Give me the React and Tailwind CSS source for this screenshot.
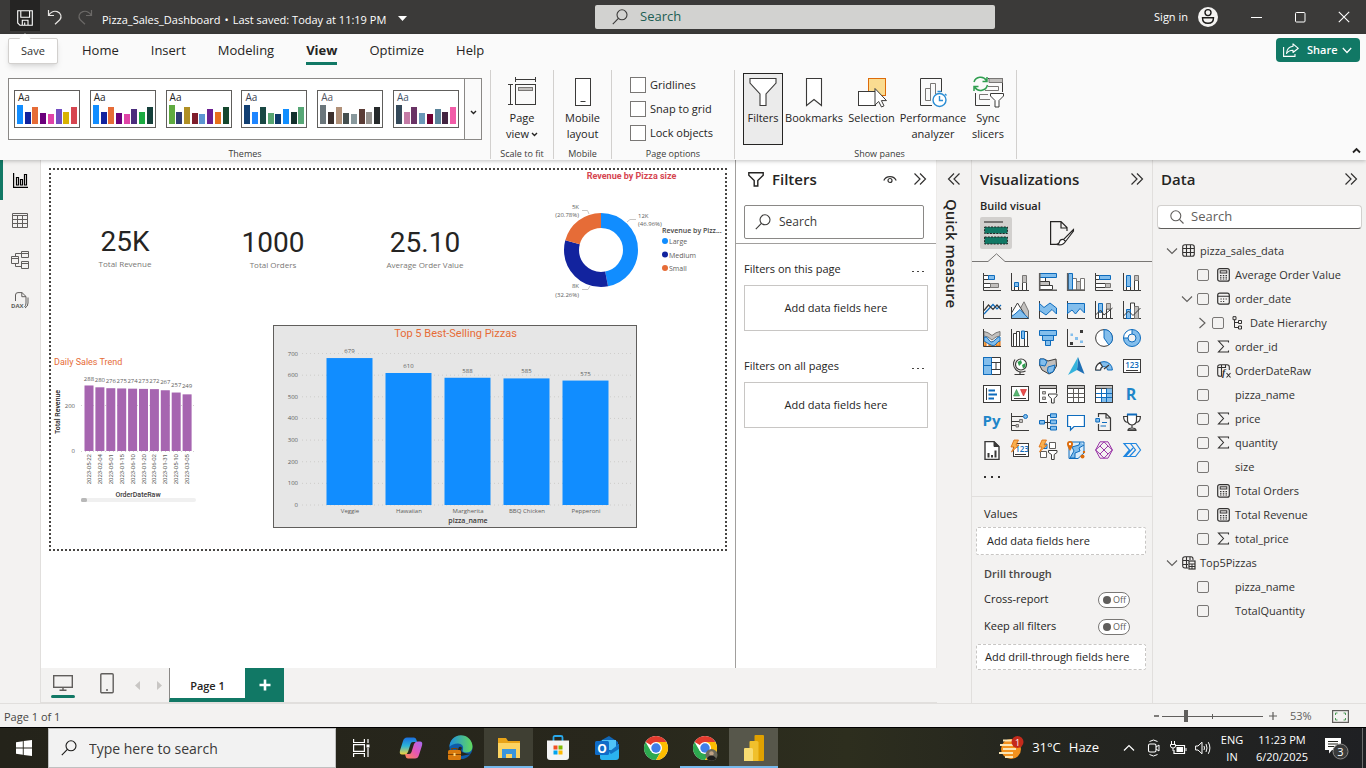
import React from "react";

const D = "#3b3a39";
const B = "#0f6cbd";
const LB = "#83beec";
const G = "#c2c0be";

/* ---------- shared icons ---------- */

function Svg({ w = 16, h, vb, children, className = "" }) {
  return (
    <svg width={w} height={h || w} viewBox={vb || `0 0 ${w} ${h || w}`} fill="none" className={`block shrink-0 ${className}`} aria-hidden="true">
      {children}
    </svg>
  );
}

const DoubleChevron = ({ flip }) => (
  <Svg w={14} h={14}>
    <path d={flip ? "M7 1.5L1.5 7L7 12.5M12.5 1.5L7 7L12.5 12.5" : "M1.5 1.5L7 7L1.5 12.5M7 1.5L12.5 7L7 12.5"} stroke="#323130" strokeWidth="1.2" />
  </Svg>
);

const Magnifier = ({ color = D, size = 16 }) => (
  <Svg w={size} vb="0 0 16 16">
    <circle cx="10" cy="5.8" r="5" stroke={color} strokeWidth="1.1" />
    <path d="M6.4 9.4L0.8 15.2" stroke={color} strokeWidth="1.1" />
  </Svg>
);

/* ---------- title bar ---------- */

function TitleBar() {
  return (
    <header className="flex h-[34px] shrink-0 items-center bg-[#3b3a39] text-white">
      <div className="flex h-full min-w-0 flex-1 items-start pl-[10px]">
        <div className="relative">
          <button aria-label="Save" className="flex h-[31px] w-[30px] items-center justify-center bg-[#252423] pt-1">
            <Svg w={16}>
              <path d="M.7 .7H15.3V15.3H3L.7 13zM3.8 .7V7.3H12.6V.7M5.3 15V10.3H11V15M7.7 12.5V15" stroke="#fff" strokeWidth="1.1" />
            </Svg>
          </button>
          <div role="tooltip" className="absolute top-[38px] -left-0.5 z-20 flex h-[26px] w-[50px] items-center justify-center rounded-xs border border-[#d2d0ce] bg-white text-[11px] text-[#323130] shadow-md">
            <span className="absolute -top-1 left-3 size-2 rotate-45 bg-white" />
            Save
          </div>
        </div>
        <button aria-label="Undo" className="flex h-[34px] w-[30px] items-center justify-center">
          <Svg w={16}>
            <path d="M1.5 1V6.5H7M1.8 6.2C4 3 7 1.6 10.2 2.6C14 3.9 15.2 8 12.8 10.8L8 15.2" stroke="#e8e6e4" strokeWidth="1.2" />
          </Svg>
        </button>
        <button aria-label="Redo" className="flex h-[34px] w-[30px] items-center justify-center">
          <Svg w={16}>
            <path d="M14.5 1V6.5H9M14.2 6.2C12 3 9 1.6 5.8 2.6C2 3.9 .8 8 3.2 10.8L8 15.2" stroke="#6b6967" strokeWidth="1.2" />
          </Svg>
        </button>
        <button className="flex h-10 items-center gap-1 whitespace-nowrap pl-0.5 text-[11px]">
          <span>Pizza_Sales_Dashboard</span>
          <span>•</span>
          <span>Last saved: Today at 11:19 PM</span>
          <Svg w={9} h={5} className="mb-1 ml-2"><path d="M0 0H9L4.5 5z" fill="#fff" /></Svg>
        </button>
      </div>
      <label className="flex h-6 w-[400px] items-center gap-3 rounded-xs bg-[#d2d2d0] pl-[17px]">
        <Magnifier size={16} />
        <input aria-label="Search" placeholder="Search" className="w-full bg-transparent text-[13px] outline-none placeholder:text-[#205e53]" />
      </label>
      <div className="flex w-[371px] items-center justify-end">
        <button className="flex items-center gap-2.5 text-[11px]">
          Sign in
          <Svg w={20}>
            <circle cx="10" cy="10" r="10" fill="#f3f2f1" />
            <circle cx="10" cy="5.6" r="3" stroke="#1b1a19" strokeWidth="1.4" />
            <path d="M4.5 10.7H15.5C15.5 14.5 13.5 16.3 10 16.3S4.5 14.5 4.5 10.7z" stroke="#1b1a19" strokeWidth="1.4" />
          </Svg>
        </button>
        <div className="flex pl-4">
          <button aria-label="Minimize" className="flex h-8 w-11 items-center justify-center"><Svg w={11}><path d="M0 5.5H11" stroke="#fff" /></Svg></button>
          <button aria-label="Maximize" className="flex h-8 w-11 items-center justify-center"><Svg w={11}><rect x=".5" y=".5" width="9.5" height="9.5" rx="1" stroke="#fff" /></Svg></button>
          <button aria-label="Close" className="flex h-8 w-11 items-center justify-center"><Svg w={12}><path d="M.8 .8L11.2 11.2M11.2 .8L.8 11.2" stroke="#fff" strokeWidth="1.1" /></Svg></button>
        </div>
      </div>
    </header>
  );
}

/* ---------- ribbon ---------- */

const themes = [
  { t: "#252423", c: ["#118dff", "#12239e", "#e66c37", "#6b007b", "#e044a7", "#744ec2", "#d9b300", "#d64550"] },
  { t: "#252423", c: ["#118dff", "#12239e", "#e66c37", "#6b007b", "#e044a7", "#4b2e7d", "#1aab40", "#15403b"] },
  { t: "#252423", c: ["#5faa3f", "#2f3a75", "#b08f24", "#7f1d2c", "#5b95d2", "#6b1f91", "#e8701a", "#15472d"] },
  { t: "#3b3f52", c: ["#123f72", "#1f86ff", "#194843", "#58a571", "#0e3b6b", "#108eff", "#12302c", "#57a776"] },
  { t: "#55565f", c: ["#6b767b", "#3c302d", "#b09078", "#444f4f", "#88989c", "#5b3c35", "#94908c", "#262a2b"] },
  { t: "#44546a", c: ["#34495a", "#c47ba6", "#6a3365", "#6a99b8", "#6f0033", "#5a839a", "#432441", "#f25ca8"] },
];
const themeHeights = [19, 12, 17, 11, 10, 15, 12, 17];

function ThemeThumb({ theme, n }) {
  return (
    <button aria-label={`Theme ${n}`} className="flex h-[38px] w-[66px] flex-col border border-[#605e5c] bg-white pl-0.5">
      <span className="pl-px text-left text-[10px] leading-[13px]" style={{ color: theme.t }}>Aa</span>
      <span className="flex h-5 w-[60px] items-end justify-between">
        {theme.c.map((c, i) => (
          <span key={i} className="w-1.5" style={{ background: c, height: themeHeights[i] }} />
        ))}
      </span>
    </button>
  );
}

function Group({ label, className, children }) {
  return (
    <section className={`mt-1 mb-px flex shrink-0 flex-col border-r border-[#d2d0ce] ${className}`}>
      <div className="flex flex-1">{children}</div>
      <div className="text-center text-[9px] leading-[10px] text-[#3b3a39]">{label}</div>
    </section>
  );
}

function BigButton({ icon, lines, className, selected }) {
  return (
    <button className={`mt-[3px] flex h-[72px] flex-col items-center border pt-px text-[11px] leading-4 text-[#252423] ${selected ? "border-[#252423] bg-[#ebebeb]" : "border-transparent"} ${className}`}>
      <span className="mb-0.5 flex h-[33px] items-center">{icon}</span>
      {lines.map((l, i) => (
        <span key={i} className="flex items-center whitespace-nowrap">{l}</span>
      ))}
    </button>
  );
}

const PageViewIcon = () => (
  <Svg w={30} h={32}>
    <path d="M8.5 1V6M28.5 1V6M8.5 3.5H28.5M1 8.5H6M1 28.5H6M3.5 8.5V28.5" stroke={D} />
    <rect x="8.5" y="8.5" width="20" height="20" stroke={D} />
    <rect x="11.5" y="11.5" width="14" height="3" fill={G} stroke="#797775" />
  </Svg>
);
const MobileIcon = () => (
  <Svg w={18} h={32}><rect x="1.5" y="2.5" width="15" height="27" fill="#fff" stroke={D} /><path d="M6.5 25.5H11.5" stroke={D} /></Svg>
);
const FilterBig = () => (
  <Svg w={28} h={32}><path d="M1 2.5H27V7L17 18V29.5H11V18L1 7z" fill="#fff" stroke={D} strokeWidth="1.1" /></Svg>
);
const BookmarkBig = () => (
  <Svg w={18} h={32}><path d="M1.5 2.5H16.5V29.5L9 23.5L1.5 29.5z" fill="#fff" stroke={D} strokeWidth="1.1" /></Svg>
);
const SelectionBig = () => (
  <Svg w={30} h={32}>
    <rect x="11.5" y="2.5" width="17" height="17" fill="#fadc91" stroke="#dd6b0a" />
    <rect x="1.5" y="15.5" width="17" height="14" fill="#fff" stroke={D} />
    <path d="M18 12.5V29L21.7 25.5L24.5 31L27 29.8L24.4 24.6H29.5z" fill="#fff" stroke={D} />
  </Svg>
);
const PerfBig = () => (
  <Svg w={30} h={32}>
    <path d="M14 29.5H2.5V2.5H23.5V16" fill="none" stroke={D} />
    <path d="M7.5 24.5V12.5H12.5V24.5zM12.5 24.5V7.5H17.5V18" stroke="#797775" />
    <circle cx="21.5" cy="24" r="6.5" fill="#fff" stroke="#2a8dd4" strokeWidth="1.4" />
    <path d="M21.5 20V24.5H25M19.5 15.5H23.5M27 18L28.5 19.5" stroke="#2a8dd4" strokeWidth="1.4" />
  </Svg>
);
const SyncBig = () => (
  <Svg w={32} h={32}>
    <path d="M16 2.5H30.5V16M3.5 17V29.5H18" stroke={D} />
    <path d="M17 2.5H30.5V6.5H17z" fill={G} stroke="#797775" />
    <path d="M16 10.5H26.5V14.5H13M18 23.5H7.5V18.5H16" stroke="#797775" />
    <path d="M2 6A7 7 0 0 1 14.5 4.5M15 1V5.5H10.5M15.5 9A7 7 0 0 1 3 11.5M2 15V10.5H6.5" stroke="#2f9e4f" strokeWidth="1.5" />
    <path d="M18.5 17.5H31.5V20L27 24.5V31H23V24.5L18.5 20z" fill="#fff" stroke={D} />
  </Svg>
);
const SmallDown = ({ className = "" }) => (
  <Svg w={7} h={5} className={className}><path d="M1 1L3.5 3.5L6 1" stroke="#252423" strokeWidth="1.4" /></Svg>
);

function Ribbon() {
  const tabs = ["Home", "Insert", "Modeling", "View", "Optimize", "Help"];
  return (
    <div className="relative z-10 shrink-0 bg-[#fafafa] shadow-[0_1px_4px_rgba(0,0,0,0.25)]">
      <div className="flex h-8 items-center justify-between">
        <nav className="flex gap-8 pl-[82px] text-[13px] text-[#252423]">
          {tabs.map((t) =>
            t === "View" ? (
              <a key={t} href="#view" className="relative font-bold leading-8">
                {t}
                <span className="absolute bottom-px left-0 h-[3px] w-full bg-[#117865]" />
              </a>
            ) : (
              <a key={t} href={`#${t.toLowerCase()}`} className="leading-8">{t}</a>
            )
          )}
        </nav>
        <button className="mr-1.5 flex h-6 w-[84px] items-center gap-2 rounded bg-[#117865] pl-[7px] text-[11px] font-semibold text-white">
          <Svg w={16} h={14}>
            <path d="M.6 4V13.4H12V11" stroke="#fff" strokeWidth="1.1" />
            <path d="M10 .8L15.3 5.3L10 9.5V7.2C7 7.2 5 8 3.5 10.5C3.8 6.5 6 3.7 10 3.2z" stroke="#fff" strokeWidth="1.1" strokeLinejoin="round" />
          </Svg>
          Share
          <Svg w={10} h={7} className="-ml-1"><path d="M.8 1L5 5.5L9.2 1" stroke="#fff" strokeWidth="1.2" /></Svg>
        </button>
      </div>
      <div className="flex h-[94px]">
        <Group label={<span className="pr-2">Themes</span>} className="w-[491px] pl-2">
          <div className="mt-2 flex h-[62px] w-[474px] border border-[#8a8886] bg-white">
            <div className="flex flex-1 items-center justify-between px-[5px]">
              {themes.map((t, i) => <ThemeThumb key={i} theme={t} n={i + 1} />)}
            </div>
            <button aria-label="More themes" className="flex w-[17px] items-center justify-center border-l border-[#8a8886] bg-[#fafafa]"><SmallDown className="mt-1.5" /></button>
          </div>
        </Group>
        <Group label="Scale to fit" className="w-[63px]">
          <BigButton className="w-full" icon={<PageViewIcon />} lines={["Page", <React.Fragment key="v">view<SmallDown className="ml-0.5" /></React.Fragment>]} />
        </Group>
        <Group label="Mobile" className="w-[58px]">
          <BigButton className="w-full" icon={<MobileIcon />} lines={["Mobile", "layout"]} />
        </Group>
        <Group label="Page options" className="w-[123px]">
          <div className="flex flex-col gap-2 pt-[7px] pl-[18px]">
            {["Gridlines", "Snap to grid", "Lock objects"].map((t) => (
              <label key={t} className="flex h-4 items-center gap-1 text-[11px] text-[#252423]">
                <input type="checkbox" className="size-4 appearance-none border border-[#797775] bg-white" />
                {t}
              </label>
            ))}
          </div>
        </Group>
        <Group label="Show panes" className="w-[282px] pl-2">
          <BigButton selected className="w-10" icon={<FilterBig />} lines={["Filters"]} />
          <BigButton className="w-[62px]" icon={<BookmarkBig />} lines={["Bookmarks"]} />
          <BigButton className="w-[53px]" icon={<SelectionBig />} lines={["Selection"]} />
          <BigButton className="w-[70px]" icon={<PerfBig />} lines={["Performance", "analyzer"]} />
          <BigButton className="w-10" icon={<SyncBig />} lines={["Sync", "slicers"]} />
        </Group>
        <div className="flex flex-1 items-end justify-end pr-[5px] pb-1.5">
          <button aria-label="Collapse ribbon"><Svg w={9} h={7}><path d="M1 5.5L4.5 2L8 5.5" stroke="#252423" strokeWidth="1.8" /></Svg></button>
        </div>
      </div>
    </div>
  );
}

/* ---------- left rail ---------- */

function LeftRail() {
  const c = "#605e5c";
  return (
    <nav className="flex w-[41px] shrink-0 flex-col border-r border-[#e1dfdd] bg-[#f3f2f1]">
      <button aria-label="Report view" className="flex h-10 items-center justify-center border-l-[3px] border-[#117865] pr-0.5">
        <Svg w={15} h={15}><path d="M.6 0V14.4H15" stroke="#000" strokeWidth="1.2" /><path d="M3.5 4.5H5.5V12H3.5zM7.5 6.5H9.5V12H7.5zM11.5 1.5H13.5V12H11.5z" stroke="#000" strokeWidth="1.2" /></Svg>
      </button>
      <button aria-label="Table view" className="flex h-10 items-center justify-center">
        <Svg w={16} h={15}><path d="M.5 .5H15.5V14.5H.5zM.5 2.5H15.5M.5 6.5H15.5M.5 10.5H15.5M5.5 2.5V14.5M10.5 2.5V14.5" stroke={c} /></Svg>
      </button>
      <button aria-label="Model view" className="flex h-10 items-center justify-center">
        <Svg w={18} h={18}><path d="M.5 5.5H7.5V12.5H.5zM.5 7.5H7.5M10.5 .5H17.5V6.5H10.5zM10.5 2.5H17.5M10.5 10.5H17.5V17.5H10.5zM10.5 12.5H17.5M4.5 5.5V2.5H10.5M4.5 12.5V15.5H10.5" stroke={c} /></Svg>
      </button>
      <button aria-label="DAX query view" className="flex h-10 items-center justify-center">
        <Svg w={18} h={17}>
          <path d="M4.5 9V3Q4.5 .6 7 .6H11L15 4.5V11Q15 13.5 13.5 15M10.8 .8V4.7H15M17 5.5V11Q17 14.5 14 16" stroke={c} />
          <text x="0" y="16" fontSize="6" fontWeight="bold" fill={c} fontFamily="Open Sans, sans-serif">DAX</text>
        </Svg>
      </button>
    </nav>
  );
}

/* ---------- report canvas ---------- */

const OS = "'Open Sans', sans-serif";
const RB = "Roboto, sans-serif";

function Card({ value, label, className }) {
  return (
    <div className={`absolute flex w-40 flex-col items-center ${className}`}>
      <div className="font-[Roboto] text-[28px] leading-8 text-[#252423]">{value}</div>
      <div className="text-[8px] leading-3 text-[#797775]">{label}</div>
    </div>
  );
}

function DonutChart() {
  const slices = [
    { v: 46.96, o: 0, c: "#118dff" },
    { v: 32.26, o: 46.96, c: "#12239e" },
    { v: 20.78, o: 79.22, c: "#e66c37" },
  ];
  const legend = [["Large", "#118dff"], ["Medium", "#12239e"], ["Small", "#e66c37"]];
  return (
    <svg width="174" height="132" viewBox="550 170 174 132" className="absolute top-0 left-[499px]" role="img" aria-label="Revenue by Pizza size">
      <text x="631.5" y="179" textAnchor="middle" fontFamily={RB} fontWeight="bold" fontSize="9" fill="#d64550">Revenue by Pizza size</text>
      <g transform="rotate(-90 601 250)">
        {slices.map((s) => (
          <circle key={s.c} cx="601" cy="250" r="29.5" fill="none" stroke={s.c} strokeWidth="15" pathLength="100" strokeDasharray={`${s.v} ${100 - s.v}`} strokeDashoffset={-s.o} />
        ))}
      </g>
      <path d="M582 210.5H587.5L589 214M627 222L630 219.5H636M582 289.5H588L590 286" stroke="#c8c6c4" fill="none" />
      <g fontFamily={OS} fontSize="6" fill="#605e5c">
        <text x="638" y="218">12K</text>
        <text x="638" y="226">(46.96%)</text>
        <text x="579" y="209" textAnchor="end">5K</text>
        <text x="579" y="217" textAnchor="end">(20.78%)</text>
        <text x="579" y="288" textAnchor="end">8K</text>
        <text x="579" y="297" textAnchor="end">(32.26%)</text>
      </g>
      <text x="662" y="233" fontFamily={OS} fontWeight="600" fontSize="7" fill="#484644">Revenue by Pizz...</text>
      {legend.map(([t, c], i) => (
        <g key={t}>
          <circle cx="665" cy={241 + i * 13.5} r="3" fill={c} />
          <text x="669" y={244 + i * 13.5} fontFamily={OS} fontSize="7" fill="#605e5c">{t}</text>
        </g>
      ))}
    </svg>
  );
}

const pizzas = [["Veggie", 679], ["Hawaiian", 610], ["Margherita", 588], ["BBQ Chicken", 585], ["Pepperoni", 575]];

function PizzaChart() {
  return (
    <div className="absolute top-[155px] left-[222px] border border-[#605e5c] bg-[#e6e6e6]">
      <svg width="362" height="201" viewBox="1 1 362 201" className="block" role="img" aria-label="Top 5 Best-Selling Pizzas">
        <text x="182.5" y="12" textAnchor="middle" fontFamily={RB} fontSize="11" fill="#e66c37">Top 5 Best-Selling Pizzas</text>
        {[0, 100, 200, 300, 400, 500, 600, 700].map((v) => (
          <g key={v}>
            <path d={`M29 ${180 - v * 0.2164}H360`} stroke="#c8c6c4" strokeWidth=".8" strokeDasharray="1 3" />
            <text x="25" y={182 - v * 0.2164} textAnchor="end" fontFamily={OS} fontSize="6" fill="#605e5c">{v}</text>
          </g>
        ))}
        {pizzas.map(([n, v], i) => (
          <g key={n}>
            <rect x={53.5 + i * 59} y={180 - v * 0.2164} width="46" height={v * 0.2164} fill="#118dff" />
            <text x={76.5 + i * 59} y={175 - v * 0.2164} textAnchor="middle" fontFamily={OS} fontSize="6" fill="#605e5c">{v}</text>
            <text x={77 + i * 59} y="188" textAnchor="middle" fontFamily={OS} fontSize="6" fill="#605e5c">{n}</text>
          </g>
        ))}
        <text x="195" y="198" textAnchor="middle" fontFamily={OS} fontWeight="600" fontSize="7" fill="#3b3a39">pizza_name</text>
      </svg>
    </div>
  );
}

const days = [["2023-05-22", 288, 382], ["2023-02-04", 280, 383], ["2023-05-01", 276, 384], ["2023-01-15", 275, 384], ["2023-06-10", 274, 384], ["2023-01-20", 273, 384], ["2023-06-02", 272, 384], ["2023-01-31", 267, 385], ["2023-05-10", 257, 388], ["2023-03-05", 249, 389]];

function DailyChart() {
  return (
    <svg width="150" height="152" viewBox="51 354 150 152" className="absolute top-[184px] left-0" role="img" aria-label="Daily Sales Trend">
      <text x="54" y="365" fontFamily={RB} fontSize="9" fill="#e66c37">Daily Sales Trend</text>
      <path d="M81 405.5H196M81 451.5H196" stroke="#c8c6c4" strokeWidth=".8" strokeDasharray="1 3" />
      <text x="75" y="408" textAnchor="end" fontFamily={OS} fontSize="6" fill="#605e5c">200</text>
      <text x="75" y="453" textAnchor="end" fontFamily={OS} fontSize="6" fill="#605e5c">0</text>
      <text transform="translate(60 412) rotate(-90)" textAnchor="middle" fontFamily={RB} fontWeight="500" fontSize="7" fill="#252423">Total Revenue</text>
      {days.map(([d, v, ly], i) => (
        <g key={d}>
          <rect x={84.5 + i * 10.9} y={451 - v * 0.2275} width="9" height={v * 0.2275} fill="#a665b0" />
          <text x={89 + i * 10.9} y={ly - 1} textAnchor="middle" fontFamily={OS} fontSize="6" fill="#605e5c">{v}</text>
          <text transform={`translate(${91 + i * 10.9} 454) rotate(-90)`} textAnchor="end" fontFamily={RB} fontSize="6" fill="#605e5c">{d}</text>
        </g>
      ))}
      <text x="138" y="497" textAnchor="middle" fontFamily={RB} fontWeight="500" fontSize="7" fill="#3b3a39">OrderDateRaw</text>
      <rect x="81" y="498" width="115" height="4" rx="2" fill="#f0f0f0" />
      <rect x="81" y="498" width="6" height="4" rx="1.5" fill="#b8b8b8" />
    </svg>
  );
}

function ReportCanvas() {
  return (
    <main className="min-w-0 flex-1 bg-white p-2">
      <div className="relative aspect-[678/383] w-full border-2 border-dotted border-[#484644]">
        <Card value="25K" label="Total Revenue" className="top-14 -left-1.5" />
        <Card value="1000" label="Total Orders" className="top-[57px] left-[142px]" />
        <Card value="25.10" label="Average Order Value" className="top-[57px] left-[294px]" />
        <DonutChart />
        <DailyChart />
        <PizzaChart />
      </div>
    </main>
  );
}

function PageTabs() {
  return (
    <div className="flex h-[35px] shrink-0 items-stretch border-b border-[#e1dfdd] bg-[#f3f2f1]">
      <button aria-label="Desktop layout" className="ml-2.5 flex w-6 flex-col items-center justify-between pt-[7px] pb-1">
        <Svg w={20} h={16}><rect x=".7" y=".7" width="18.6" height="11.6" stroke="#605e5c" strokeWidth="1.4" /><path d="M10 12.5V15M6.5 15.3H13.5" stroke="#605e5c" strokeWidth="1.4" /></Svg>
        <span className="h-[3px] w-6 rounded-sm bg-[#117865]" />
      </button>
      <button aria-label="Phone layout" className="ml-6 flex w-4 justify-center pt-[5px]">
        <Svg w={14} h={21}><rect x=".8" y=".8" width="12.4" height="19" rx="1" stroke="#605e5c" strokeWidth="1.4" /><path d="M6 17H8" stroke="#605e5c" strokeWidth="1.4" /></Svg>
      </button>
      <button aria-label="Previous page" className="ml-3.5 flex w-4 items-center justify-center"><Svg w={5} h={9}><path d="M5 0V9L0 4.5z" fill="#c8c6c4" /></Svg></button>
      <button aria-label="Next page" className="ml-1.5 flex w-4 items-center justify-center"><Svg w={5} h={9}><path d="M0 0V9L5 4.5z" fill="#c8c6c4" /></Svg></button>
      <button className="ml-0.5 flex w-[76px] items-center justify-center border-b-4 border-l border-b-[#117865] border-l-[#8a8886] bg-white pt-1.5 text-[11px] font-semibold text-[#252423]">Page 1</button>
      <button aria-label="New page" className="flex w-[39px] items-center justify-center bg-[#117865]"><Svg w={12}><path d="M6 .5V11.5M.5 6H11.5" stroke="#fff" strokeWidth="2.6" /></Svg></button>
    </div>
  );
}

/* ---------- filters ---------- */

function FilterSection({ title }) {
  return (
    <section className="pt-4">
      <div className="flex h-[18px] items-center justify-between">
        <h3 className="text-[11px] text-[#252423]">{title}</h3>
        <button aria-label={`${title} options`} className="pt-1 pr-1">
          <Svg w={12} h={1}><path d="M0 .5H2M5 .5H7M10 .5H12" stroke="#484644" /></Svg>
        </button>
      </div>
      <div className="mt-[7px] flex h-[46px] items-center justify-center border border-[#c8c6c4] bg-white text-[11px] text-[#252423]">Add data fields here</div>
    </section>
  );
}

function FiltersPane() {
  return (
    <aside className="w-[202px] shrink-0 border-x border-l-[#a19f9d] border-r-[#edebe9] bg-white">
      <div className="flex h-[38px] items-center pl-3">
        <Svg w={16} h={15}><path d="M.8 .8H15.2V3.2L9.8 8.6V14H6.2V8.6L.8 3.2z" stroke="#252423" strokeWidth="1.4" /></Svg>
        <h2 className="ml-2 flex-1 text-[15px] font-semibold text-[#252423]">Filters</h2>
        <button aria-label="Show filter pane">
          <Svg w={14} h={9}><path d="M.8 5.5C3 .2 11 .2 13.2 5.5" stroke="#323130" strokeWidth="1.2" /><circle cx="7" cy="5.5" r="2" stroke="#323130" strokeWidth="1.2" /></Svg>
        </button>
        <button aria-label="Collapse filters" className="mr-[9px] ml-4"><DoubleChevron /></button>
      </div>
      <div className="border-b border-[#a19f9d] pt-[7px] pr-3 pb-1 pl-2">
        <label className="flex h-[34px] items-center gap-2 rounded-xs border border-[#8a8886] pl-2.5">
          <Magnifier />
          <input aria-label="Search filters" placeholder="Search" className="w-full bg-transparent text-[12px] outline-none placeholder:text-[#3b3a39]" />
        </label>
      </div>
      <div className="flex flex-col gap-[10px] pr-2 pl-2">
        <FilterSection title="Filters on this page" />
        <FilterSection title="Filters on all pages" />
      </div>
    </aside>
  );
}

/* ---------- visualizations ---------- */

const axis = <path d="M.5 0V17.5H18" stroke={D} />;
const bolt = <path d="M3 -1L0 6H3L.5 11L8 4H5L7.5 -1z" fill="#f9b04f" stroke="#dd6b0a" strokeWidth=".8" />;

const viz = [
  ["Stacked bar chart", <>{axis}<path d="M.5 2.5H5.5V6.5H.5zM.5 10.5H7.5V14.5H.5z" fill="#fff" stroke={D} /><path d="M5.5 2.5H11.5V6.5H5.5z" fill={LB} stroke={B} /><path d="M7.5 10.5H15.5V14.5H7.5z" fill={G} stroke="#797775" /></>],
  ["Stacked column chart", <>{axis}<path d="M3.5 13.5H7.5V17.5H3.5zM11.5 9.5H15.5V17.5H11.5z" fill="#fff" stroke={D} /><path d="M3.5 9.5H7.5V13.5H3.5z" fill={LB} stroke={B} /><path d="M11.5 2.5H15.5V9.5H11.5z" fill={G} stroke="#797775" /></>],
  ["Clustered bar chart", <><path d="M.5 4.5H6.5V8.5H.5zM.5 12.5H13.5V16.5H.5z" fill="#fff" stroke={D} /><path d="M.5 8.5H10.5V12.5H.5z" fill={G} stroke={D} /><path d="M.5 .5H17.5V4.5H.5z" fill={LB} stroke={B} /><path d="M.7 0V17.3H18" stroke="#605e5c" strokeWidth="1.6" /></>],
  ["Clustered column chart", <><path d="M5.5 5.5H9.5V17H5.5zM13.5 5.5H17.5V17H13.5z" fill="#fff" stroke="#797775" /><path d="M9.5 8.5H13.5V17H9.5z" fill={G} stroke="#797775" /><path d="M1.5 .5H5.5V17H1.5z" fill={LB} stroke={B} /><path d="M.7 0V17.3H18" stroke="#605e5c" strokeWidth="1.6" /></>],
  ["100% stacked bar chart", <>{axis}<path d="M.5 2.5H4.5V6.5H.5zM.5 10.5H10.5V14.5H.5z" fill="#fff" stroke={D} /><path d="M4.5 2.5H15.5V6.5H4.5z" fill={LB} stroke={B} /><path d="M10.5 10.5H15.5V14.5H10.5z" fill={G} stroke="#797775" /></>],
  ["100% stacked column chart", <>{axis}<path d="M3.5 13.5H7.5V17.5H3.5zM11.5 7.5H15.5V17.5H11.5z" fill="#fff" stroke={D} /><path d="M3.5 2.5H7.5V13.5H3.5z" fill={LB} stroke={B} /><path d="M11.5 2.5H15.5V7.5H11.5z" fill={G} stroke="#797775" /></>],
  ["Line chart", <>{axis}<path d="M1 13L10 3.5L14 8L18 4" stroke={B} strokeWidth="1.2" /><path d="M1 9.5L5.5 4L10 8.5L14 4L18 8.5" stroke={D} strokeWidth="1.2" /></>],
  ["Area chart", <><path d="M9 8L13 .8L17.5 10V17H9z" fill={G} stroke="#797775" /><path d="M.5 12L6.5 2L13 12.5L9 17H1z" fill="#fff" stroke={D} /><path d="M.5 15.5L4 13L9 8.5L17.5 17.5H.5z" fill={LB} stroke={B} /><path d="M.5 6V17.5H17.5" stroke={D} /></>],
  ["Stacked area chart", <>{axis}<path d="M.5 2.5L5 6.5L11 2L17.5 7V13L13 8.5L7 14L.5 9.5z" fill={LB} stroke={B} /></>],
  ["100% stacked area chart", <>{axis}<path d="M.5 2.5H17.5V12L13 7.5L8.5 13L5 9L.5 12.5z" fill={LB} stroke={B} /></>],
  ["Line and stacked column chart", <>{axis}<path d="M3.5 11V17.5H7.5V11zM11.5 8V17.5H15.5V8z" fill="#fff" stroke={D} /><path d="M3.5 2.5H7.5V11H3.5z" fill={LB} stroke={B} /><path d="M11.5 2.5H15.5V8H11.5z" fill={G} stroke="#797775" /><path d="M.5 14L5.5 9L9 14L17.5 7" stroke={D} /></>],
  ["Line and clustered column chart", <>{axis}<path d="M7.5 2H11.5V17.5H7.5z" fill="#fff" stroke={D} /><path d="M3.5 8.5H7.5V17.5H3.5z" fill={LB} stroke={B} /><path d="M11.5 5.5H15.5V17.5H11.5z" fill={G} stroke="#797775" /><path d="M.5 15L5.5 10L10 14.5L17.5 7" stroke={D} /></>],
  ["Ribbon chart", <><path d="M.5 9H3V17H.5zM13 12H17V17H13zM6 13H11V17H6z" fill="#f5a64b" stroke="#dd6b0a" /><path d="M1 2.5Q5 3 9 6.5Q13 3 17 2.5V7Q13 7 9 11Q5 7 1 7z" fill={G} stroke="#797775" /><path d="M1 8Q4 7 6 11T12 11T17 8V12Q15 12 13 15T6 15T1 12z" fill={LB} stroke={B} />{axis}</>],
  ["Waterfall chart", <>{axis}<path d="M2.5 4.5H5.500V17.5H2.500zM5.500 2.500H8.500V17.500H5.500zM13.500 2.500H16.500V17.500H13.500z" fill="#fff" stroke={D} /><path d="M10.500 2H13.500V9.500H10.500z" fill={LB} stroke={B} /></>],
  ["Funnel chart", <path d="M.5 1.5H17.5V6.5H.5zM3.5 6.5H14.5V11.5H3.5zM6.5 11.5H11.5V16.5H6.5z" fill={LB} stroke={B} />],
  ["Scatter chart", <>{axis}<path d="M13 1H16V4H13zM3 13H6V16H3z" fill={D} /><path d="M3.5 4.5H6V7H3.5zM8 8H11V11H8zM13 11.5H16V14H13z" fill={LB} /></>],
  ["Pie chart", <><circle cx="9" cy="9" r="8.4" fill="#fff" stroke={D} /><path d="M9 .6A8.4 8.4 0 0 1 13.8 15.9L9 9z" fill={LB} stroke={B} /></>],
  ["Donut chart", <><circle cx="9" cy="9" r="6.3" stroke={LB} strokeWidth="4.6" /><path d="M2.7 9A6.3 6.3 0 0 1 9 2.7" stroke="#fff" strokeWidth="4.6" /><circle cx="9" cy="9" r="8.5" stroke={B} /><circle cx="9" cy="9" r="4" stroke={B} /><path d="M9 .5V5M.5 9H5" stroke={B} /></>],
  ["Treemap", <><path d="M.5 .5H17.5V17.5H.5z" fill="#fff" stroke={D} /><path d="M.5 .5H8.5V17.5H.5z" fill={LB} stroke={B} /><path d="M.5 8.5H8.5" stroke={B} /><path d="M8.5 5.5H17.5M8.5 12.5H17.5M13 5.5V12.5" stroke={D} /></>],
  ["Map", <><circle cx="10" cy="7.5" r="5.5" fill="#fff" stroke={D} strokeWidth="1.2" /><path d="M6.500 5L10 3L11 6L8 9zM11 8L14.5 6V10L12 11.5z" fill="#2f9e4f" /><path d="M4 2.5A8 8 0 0 0 14.5 14M9 15V17.5M3.5 17.5H13.5" stroke={D} strokeWidth="1.2" /></>],
  ["Filled map", <><path d="M1 2H5L9 4L17 2L17.5 9L14 15L10 17L3 13L.5 8z" fill={G} stroke={D} /><path d="M1 2H5L8 4.5L6 9L.7 8zM9 10L16 8L14.5 14.5L10 16.5L8.5 14z" fill={LB} stroke={B} /></>],
  ["Azure map", <><path d="M11 0L17.5 17L10 13z" fill="#1d6fb5" /><path d="M11 0L10 13L1 18z" fill="#35b3dc" /></>],
  ["Gauge", <><path d="M.6 13A8.4 8.4 0 0 1 17.4 13H12.5A3.5 3.5 0 0 0 5.5 13z" fill={LB} stroke={B} /><path d="M.6 13A8.4 8.4 0 0 1 5 5.6L7.5 9.8A3.5 3.5 0 0 0 5.5 13zM9 12L14 8" fill="#fff" stroke={D} strokeWidth="1.2" /></>],
  ["Card", <><rect x=".5" y="2.5" width="17" height="13" fill="#fff" stroke={D} /><text x="9" y="11" textAnchor="middle" fontSize="8" fill={B} fontFamily={OS} fontWeight="600">123</text><path d="M3 13.5H15" stroke={D} /></>],
  ["Multi-row card", <><rect x=".5" y=".5" width="17" height="17" fill="#fff" stroke={D} /><path d="M3.5 3V15" stroke={D} /><path d="M5.5 5.5H12M5.5 9.5H14M5.5 13.5H11" stroke={B} strokeWidth="1.8" /></>],
  ["KPI", <><rect x=".5" y="1.5" width="17" height="14" fill="#fff" stroke={D} /><path d="M2.5 11L5.5 4.5L8.5 11z" fill="#58b873" stroke="#2f8a46" strokeWidth=".6" /><path d="M9.5 4.5H15.5L12.5 11z" fill="#e8504f" stroke="#c22" strokeWidth=".6" /><path d="M3 13.5H15" stroke={D} /></>],
  ["Slicer", <><path d="M8 17.5H.5V.5H17.5V8" fill="#fff" stroke={D} /><path d="M.5 .5H17.5V3.5H.5z" fill={G} stroke={D} /><path d="M3.5 6.5H6.5V9H3.5zM3.5 12H6.5V14.5H3.5z" fill={G} stroke="#797775" /><path d="M9.5 9H18V11L15.2 13.5V18H12.5V13.5L9.5 11z" fill="#fff" stroke={D} /></>],
  ["Table", <><rect x=".5" y=".5" width="17" height="17" fill="#fff" stroke={D} /><path d="M.5 .5H17.5V3.5H.5z" fill={G} stroke={D} /><path d="M.5 8.5H17.5M.5 12.5H17.5M6.5 3.5V17.5M11.5 3.5V17.5" stroke="#605e5c" /></>],
  ["Matrix", <><rect x=".5" y=".5" width="17" height="17" fill="#fff" stroke={D} /><path d="M.5 .5H17.5V3.5H.5z" fill={G} stroke={D} /><path d="M12 3.5H17.5V17.5H6.5V12.5H12z" fill={LB} /><path d="M.5 8.5H17.5M.5 12.5H17.5M6.5 3.5V17.5M11.5 3.5V17.5" stroke={B} /><rect x=".5" y=".5" width="17" height="17" stroke={D} /></>],
  ["R script visual", <text x="8" y="15" textAnchor="middle" fontSize="16" fontWeight="bold" fill="#1f86c9" fontFamily={OS}>R</text>],
  ["Python visual", <text x="8.5" y="13" textAnchor="middle" fontSize="15" fontWeight="bold" fill="#1f86c9" fontFamily={OS}>Py</text>],
  ["Key influencers", <>{axis}<path d="M.5 3.5H12M.5 8.5H8M.5 12.5H5" stroke={D} /><circle cx="14.5" cy="3.5" r="2" fill={LB} stroke={B} /><path d="M8.5 6.5H11.5V9.5H8.5zM5 11.5H7.5V14H5z" fill={G} stroke="#797775" /></>],
  ["Decomposition tree", <><path d="M5 9.5H8.5V2.5H12M8.5 9.5H12M8.5 9V15.5H12" stroke={D} /><path d="M.5 7.5H5.5V11H.5zM11.5 .8H17.5V4.5H11.5zM11.5 7H17.5V10.8H11.5zM11.5 13.3H17.5V17H11.5z" fill={LB} stroke={B} /></>],
  ["Q&A", <path d="M.6 2.5H17.4V13.5H7L3.5 17V13.5H.6z" fill="#fff" stroke={B} strokeWidth="1.2" />],
  ["Smart narrative", <><path d="M3.5 4V.6H11L15.5 5V17.5H3.5V11M11 .6V5H15.5" fill="none" stroke={D} strokeWidth="1.2" /><path d="M.8 5.5H4.5V9H.8z" fill={LB} stroke={B} /><path d="M7 9.5H12M5.5 13H11" stroke={B} /></>],
  ["Metrics", <><path d="M4.5 1.5H13.5V7Q13.5 11.5 9 12Q4.5 11.5 4.5 7zM4.5 3.5H.6Q.6 9 5 9.5M13.5 3.5H17.4Q17.4 9 13 9.5M9 12V15M5 17.5Q5 15 9 15T13 17.5z" fill="#fff" stroke={D} strokeWidth="1.2" /><path d="M4 1.5H14" stroke={B} strokeWidth="2" /><path d="M5 17H13" stroke={D} strokeWidth="1.5" /></>],
  ["Paginated report", <><path d="M2 .6H11L16 5.5V18.4H2z" fill="#fff" stroke={D} strokeWidth="1.4" /><path d="M11 .6V5.5H16z" fill={D} stroke={D} /><path d="M4.5 12H6.5V16.5H4.5zM8 14H10V16.5H8zM11.5 9.5H13.5V16.5H11.5z" fill={D} /></>],
  ["Card (new)", <><rect x="2.5" y="2.5" width="15" height="13" fill="#fff" stroke={D} /><text x="11" y="11" textAnchor="middle" fontSize="8" fill={B} fontFamily={OS} fontWeight="600">123</text><path d="M4 13.5H15" stroke={D} />{bolt}</>],
  ["Slicer (new)", <><path d="M10.5 1.5H16.5V7.5H10.5zM1.5 10.5H7.5V16.5H1.5z" fill="#fff" stroke="#605e5c" /><path d="M4.5 3H8V7.5H4.5z" fill={LB} stroke={B} /><path d="M9.5 9.5H18V11.5L15.2 13.5V18.5H12.5V13.5L9.5 11.5z" fill="#fff" stroke={D} />{bolt}</>],
  ["ArcGIS Maps", <><path d="M2 1H17V12L11 17.5H2z" fill="#d9ecfa" stroke={B} /><path d="M17 4L12 7L13 10L8 12V17H3L7 10L5 6L12 4L13 1" fill={LB} stroke={B} /><path d="M0 3A3 3 0 0 1 6 3Q6 5 3 10Q0 5 0 3z" fill="#dd6b0a" /><circle cx="3" cy="3" r="1.2" fill="#fff" /><circle cx="15.5" cy="15.5" r="2" fill="#dd6b0a" /><circle cx="17" cy="11" r="1.2" fill="#dd6b0a" /></>],
  ["Power Apps", <path d="M9 .8L5 5L.6 9L5 13L9 17.2L13 13L17.4 9L13 5zM5 5L13 13M13 5L5 13M5 .8H13L17.4 9L13 17.2H5L.6 9z" stroke="#9a35a8" />],
  ["Power Automate", <path d="M1 2.5H13L17.5 9L12.5 15.5H1L6.5 9zM7.5 2.5L12.5 9L6.5 15.5M2.5 15.5L10 7" stroke="#1f86e0" strokeWidth="1.2" />],
];

function Toggle({ label }) {
  return (
    <label className="flex h-[27px] items-center justify-between pr-[22px] pl-3 text-[11px] text-[#252423]">
      {label}
      <input type="checkbox" role="switch" className="sr-only" />
      <span className="flex h-4 w-8 items-center gap-0.5 rounded-full border border-[#797775] bg-white pl-1 text-[9px] text-[#605e5c]">
        <span className="size-2 rounded-full bg-[#605e5c]" />
        Off
      </span>
    </label>
  );
}

function VisualizationsPane() {
  return (
    <aside className="flex w-[182px] shrink-0 flex-col border-x border-[#e1dfdd] bg-[#f3f2f1]">
      <div className="flex h-[38px] items-center justify-between pr-2 pl-2">
        <h2 className="text-[15px] font-semibold text-[#252423]">Visualizations</h2>
        <button aria-label="Collapse visualizations"><DoubleChevron /></button>
      </div>
      <h3 className="h-[19px] pl-2 text-[11px] leading-[15px] font-semibold text-[#252423]">Build visual</h3>
      <div className="flex h-8 gap-[34px] pl-2">
        <button aria-label="Build visual" className="flex size-8 items-center justify-center rounded-xs bg-[#d2d0ce]">
          <Svg w={24} h={24}>
            <path d="M0 1H19" stroke={D} strokeWidth="1.2" />
            <rect x=".6" y="6" width="22.8" height="6.5" fill="#117865" stroke="#252423" strokeDasharray="2 1.2" />
            <rect x=".6" y="16" width="22.8" height="7" fill="#117865" stroke="#252423" strokeDasharray="2 1.2" />
          </Svg>
        </button>
        <button aria-label="Format visual" className="flex size-8 items-center justify-center">
          <Svg w={26} h={26}>
            <path d="M9 24.4H1.6V1.6H12L18 7.5V11M12 1.6V8H18" stroke="#252423" strokeWidth="1.2" />
            <path d="M24.5 9.5L14.5 19.5L16.5 21.5L24.5 11zM14.5 19.5Q11 19 10.5 22Q10 24 7.5 24.5Q14 26 16.5 21.5" fill="#fff" stroke="#252423" strokeWidth="1.1" />
          </Svg>
        </button>
      </div>
      <div className="flex h-[13px] items-end">
        <span className="w-4 border-b border-[#797775]" />
        <Svg w={17} h={9}><path d="M0 8.5L8.5 .8L17 8.5" stroke="#797775" /></Svg>
        <span className="flex-1 border-b border-[#797775]" />
      </div>
      <div className="grid grid-cols-[repeat(6,28px)] pt-[6px] pl-[6px]">
        {viz.map(([name, art]) => (
          <button key={name} aria-label={name} className="flex size-7 items-center justify-center">
            <svg width="18" height="18" viewBox="0 0 18 18" fill="none" className="overflow-visible" aria-hidden="true">{art}</svg>
          </button>
        ))}
      </div>
      <button aria-label="More visuals" className="flex h-8 shrink-0 items-center pb-1.5 pl-3">
        <Svg w={16} h={2}><path d="M0 1H2M7 1H9M14 1H16" stroke="#323130" strokeWidth="2" /></Svg>
      </button>
      <div className="border-t border-[#e1dfdd] pt-[9px]">
        <h3 className="pl-3 text-[11px] leading-4 text-[#252423]">Values</h3>
        <div className="mx-1 mt-[5px] flex h-7 w-[170px] items-center rounded-xs border border-dashed border-[#c8c6c4] bg-white pl-2.5 text-[11px] text-[#252423]">Add data fields here</div>
        <h3 className="pt-[11px] pb-1 pl-3 text-[11px] leading-4 font-semibold text-[#484644]">Drill through</h3>
        <Toggle label="Cross-report" />
        <Toggle label="Keep all filters" />
        <div className="mx-1 mt-1 flex h-[26px] w-[170px] items-center rounded-xs border border-dashed border-[#c8c6c4] bg-white pl-2 text-[11px] whitespace-nowrap text-[#252423]">Add drill-through fields here</div>
      </div>
    </aside>
  );
}

/* ---------- data ---------- */

const I = "#323130";
const fieldIcons = {
  table: <path d="M.7 3Q.7 .7 3 .7H10Q12.3 .7 12.3 3V10Q12.3 12.3 10 12.3H3Q.7 12.3 .7 10zM.7 4.5H12.3M.7 8.5H12.3M4.5 .7V12.3M8.5 .7V12.3" stroke={I} strokeWidth="1.1" />,
  calcTable: <><path d="M6 12H3Q.7 12 .7 9.5V3Q.7 .7 3 .7H9Q11 .7 11 3V4M.7 4.5H7M.7 8.5H6M4.5 .7V12M8 .7V4" stroke={I} strokeWidth="1.1" /><rect x="7" y="5" width="6" height="8" fill="#f3f2f1" stroke={I} strokeWidth="1.2" /><path d="M7 8H13M7 10.5H13M10 8V13" stroke={I} /></>,
  measure: <><rect x=".7" y=".6" width="11.6" height="12.6" rx="2" stroke={I} strokeWidth="1.2" /><rect x="3.2" y="2.8" width="6.6" height="2.2" stroke={I} /><path d="M3 7.5H4.5M5.8 7.5H7.3M8.5 7.5H10M3 9.2H4.5M5.8 9.2H7.3M8.5 9.2H10M3 11H4.5M5.8 11H7.3M8.5 11H10" stroke={I} strokeWidth="1.1" /></>,
  date: <><rect x=".7" y="1.2" width="11.6" height="11" rx="2" stroke={I} strokeWidth="1.2" /><path d="M.7 4.2H12.3M3.5 7H4.7M6 7H7.2M8.6 7H9.8M3.5 9.5H4.7M6 9.5H7.2" stroke={I} strokeWidth="1.1" /></>,
  hierarchy: <path d="M1 .7H4V3.7H1zM2.5 3.7V11.5H6.5M2.5 6.5H6.5M6.5 4.5H9.5V7.5H6.5zM6.5 10H9.5V13H6.5z" stroke={I} />,
  sum: <path d="M11.5 2.5V1H1.5L6.5 6.5L1.5 12H11.5V10.5" stroke={I} strokeWidth="1.1" />,
  calcCol: <><path d="M5 12.3H3Q.7 12.3 .7 10V3Q.7 .7 3 .7H10Q12.3 .7 12.3 3V6M.7 3.5H8M4.5 .7V12.3M8.5 .7V4" stroke={I} strokeWidth="1.1" /><text x="5" y="12" fontSize="10" fontStyle="italic" fontWeight="600" fontFamily="Liberation Serif, serif" fill={I}>f</text><path d="M9.5 9L13.5 13.5M13.5 9L9.5 13.5" stroke={I} strokeWidth="1.1" /></>,
};

const fields = [
  { n: "pizza_sales_data", icon: "table", kind: "table" },
  { n: "Average Order Value", icon: "measure" },
  { n: "order_date", icon: "date", open: true },
  { n: "Date Hierarchy", icon: "hierarchy", kind: "nested" },
  { n: "order_id", icon: "sum" },
  { n: "OrderDateRaw", icon: "calcCol" },
  { n: "pizza_name" },
  { n: "price", icon: "sum" },
  { n: "quantity", icon: "sum" },
  { n: "size" },
  { n: "Total Orders", icon: "measure" },
  { n: "Total Revenue", icon: "measure" },
  { n: "total_price", icon: "sum" },
  { n: "Top5Pizzas", icon: "calcTable", kind: "table" },
  { n: "pizza_name" },
  { n: "TotalQuantity" },
];

const Chev = ({ right }) => (
  <Svg w={12} h={12}><path d={right ? "M3.5 1L9 6L3.5 11" : "M1 3.5L6 8.5L11 3.5"} stroke="#605e5c" strokeWidth="1.1" /></Svg>
);

function FieldRow({ f }) {
  const icon = (
    <svg width="14" height="14" viewBox="0 0 14 14" fill="none" className="shrink-0" aria-hidden="true">{f.icon && fieldIcons[f.icon]}</svg>
  );
  if (f.kind === "table") {
    return (
      <li className="flex h-6 items-center pl-[13px]">
        <Chev />
        <span className="mr-1 ml-1">{icon}</span>
        {f.n}
      </li>
    );
  }
  const nested = f.kind === "nested";
  return (
    <li className={`flex h-6 items-center ${nested ? "pl-[43px]" : "pl-7"}`}>
      <span className="w-4 shrink-0">{(f.open || nested) && <Chev right={nested} />}</span>
      <label className="flex items-center whitespace-nowrap">
        <input type="checkbox" className="mr-2 size-3 shrink-0 appearance-none rounded-xs border border-[#797775]" />
        <span className="mr-1">{icon}</span>
        {f.n}
      </label>
    </li>
  );
}

function DataPane() {
  return (
    <aside className="w-[213px] shrink-0 bg-[#f3f2f1]">
      <div className="flex h-[38px] items-center justify-between pr-2 pl-2">
        <h2 className="text-[15px] font-semibold text-[#252423]">Data</h2>
        <button aria-label="Collapse data"><DoubleChevron /></button>
      </div>
      <label className="mt-[7px] mr-1 ml-1 flex h-6 items-center gap-[7px] rounded border border-[#d2d0ce] border-b-[#605e5c] bg-white pl-3">
        <Svg w={14}><circle cx="5.8" cy="5.8" r="5" stroke="#605e5c" strokeWidth="1.1" /><path d="M9.4 9.4L13.5 13.5" stroke="#605e5c" strokeWidth="1.1" /></Svg>
        <input aria-label="Search data" placeholder="Search" className="w-full bg-transparent text-[13px] outline-none placeholder:text-[#605e5c]" />
      </label>
      <ul className="pt-[10px] text-[11px] text-[#323130]">
        {fields.map((f, i) => <FieldRow key={i} f={f} />)}
      </ul>
    </aside>
  );
}

/* ---------- status bar ---------- */

function StatusBar() {
  return (
    <footer className="flex h-6 shrink-0 items-center justify-between border-t border-[#e1dfdd] bg-[#f3f2f1] pb-px pl-1 text-[11px] text-[#484644]">
      <span className="pt-1">Page 1 of 1</span>
      <div className="flex items-center pt-0.5">
        <button aria-label="Zoom out" className="w-3"><Svg w={5} h={2} className="mx-auto"><path d="M0 1H5" stroke="#605e5c" strokeWidth="1.6" /></Svg></button>
        <input
          type="range"
          aria-label="Zoom level"
          min="0"
          max="100"
          defaultValue="23"
          className="h-[13px] w-[101px] appearance-none bg-[linear-gradient(#605e5c,#605e5c),linear-gradient(#605e5c,#605e5c)] bg-[length:100%_1px,1px_5px] bg-center bg-no-repeat [&::-webkit-slider-thumb]:h-3 [&::-webkit-slider-thumb]:w-1 [&::-webkit-slider-thumb]:appearance-none [&::-webkit-slider-thumb]:bg-[#605e5c]"
        />
        <button aria-label="Zoom in" className="ml-1 w-3"><Svg w={8} className="mx-auto"><path d="M4 0V8M0 4H8" stroke="#605e5c" strokeWidth="1.2" /></Svg></button>
        <span className="ml-[11px] w-[42px] text-[#605e5c]">53%</span>
        <button aria-label="Fit to page" className="mr-[17px]">
          <Svg w={17} h={13}><rect x=".6" y=".6" width="15.8" height="11.8" stroke="#605e5c" strokeWidth="1.2" /><path d="M3.5 5V3H5.5M11.5 3H13.5V5M13.5 8V10H11.5M5.5 10H3.5V8" stroke="#4d9a57" /></Svg>
        </button>
      </div>
    </footer>
  );
}

/* ---------- taskbar ---------- */

const Chrome = ({ badge }) => (
  <Svg w={26}>
    <circle cx="13" cy="13" r="12" fill="#fff" />
    <path d="M13 13L2.6 7A12 12 0 0 1 23.4 7z" fill="#e33b2e" />
    <path d="M2.6 7A12 12 0 0 0 13 25L18.2 16L13 13L7.8 16z" fill="#2da94f" />
    <path d="M23.4 7H13L18.2 16L13 25A12 12 0 0 0 23.4 7z" fill="#fdbd00" />
    <circle cx="13" cy="13" r="6" fill="#fff" />
    <circle cx="13" cy="13" r="4.7" fill="#3f7ee8" />
    {badge && <><circle cx="19.5" cy="20" r="6" fill="#6d6a5c" /><circle cx="19.5" cy="18.5" r="2.2" fill="#c0a284" /><path d="M15 24Q16 20.5 19.5 20.5T24 24Q19.5 27.5 15 24z" fill="#1d1d1d" /></>}
  </Svg>
);

const apps = [
  ["Task view", <Svg w={17} h={18} key="t"><path d="M.6 0V3.5H11.4V0M.6 18V14.5H11.4V18M.6 5.6H11.4V12.4H.6zM15 0V4M15 9V18" stroke="#fff" strokeWidth="1.2" /><path d="M13.5 5.5H16.5V8.5H13.5z" fill="#fff" /></Svg>],
  ["Copilot", <Svg w={24} key="c"><defs><linearGradient id="ca" x1="0" y1="0" x2="0" y2="1"><stop offset="0" stopColor="#1b6fe0" /><stop offset=".5" stopColor="#2bb5d8" /><stop offset="1" stopColor="#f6d33a" /></linearGradient><linearGradient id="cb" x1="1" y1="0" x2="0" y2="1"><stop offset="0" stopColor="#a56af5" /><stop offset=".5" stopColor="#e656b4" /><stop offset="1" stopColor="#ff8a4c" /></linearGradient></defs><path d="M8 1.5H15Q17 1.5 17.5 4L18 6H14Q12 6 11.5 8L9 16Q8 18.5 5.5 18.5H3Q0 18.5 1 14.5L4 5Q5 1.5 8 1.5z" fill="url(#ca)" /><path d="M16 22.5H9Q7 22.5 6.5 20L6 18H10Q12 18 12.5 16L15 8Q16 5.5 18.5 5.5H21Q24 5.5 23 9.5L20 19Q19 22.5 16 22.5z" fill="url(#cb)" /></Svg>],
  ["Edge", <Svg w={26} key="e"><defs><linearGradient id="ea" x1="0" y1="0" x2="1" y2="0"><stop offset="0" stopColor="#1f8fe0" /><stop offset="1" stopColor="#62d95c" /></linearGradient></defs><circle cx="14" cy="12.5" r="11.5" fill="#0f5ba8" /><path d="M2.5 12A11.5 11.5 0 0 1 25.5 11.5Q25.5 17.5 19 17.5Q14.5 17 16 14.5Q17 9 11 8.5Q5 8.5 2.5 12z" fill="url(#ea)" /><path d="M12 12Q9 17 14 21L24 19Q19 18.5 16 17.5Q13 16 15 13Q14 11 12 12z" fill="#25261c" /><rect x="1" y="15" width="13" height="10" rx="1.5" fill="#d97a0d" /><path d="M1 19.5H14M5 15V13.5H10V15" stroke="#7c4203" strokeWidth="1.2" /><rect x="6.5" y="18" width="2" height="3" fill="#ffd67a" /></Svg>],
  ["File Explorer", <Svg w={24} h={22} key="f"><path d="M1 1H9L11 4H23V21H1z" fill="#e8a317" /><path d="M1 6H23V21H1z" fill="#fcd462" /><path d="M5 12H19V21H15V17H9V21H5z" fill="#3a95dc" /></Svg>, "bg-[#3f3f33]", true],
  ["Microsoft Store", <Svg w={24} h={26} key="s"><path d="M7.5 6V2.5Q7.5 1 9 1H15Q16.5 1 16.5 2.5V6" stroke="#29a8ea" strokeWidth="1.8" /><path d="M1 5.5H23V22Q23 25 20 25H4Q1 25 1 22z" fill="#f4f4f4" /><path d="M7.5 10.5H11.5V14.5H7.5z" fill="#f25022" /><path d="M12.5 10.5H16.5V14.5H12.5z" fill="#7fba00" /><path d="M7.5 15.5H11.5V19.5H7.5z" fill="#00a4ef" /><path d="M12.5 15.5H16.5V19.5H12.5z" fill="#ffb900" /></Svg>],
  ["Outlook", <Svg w={26} h={26} key="o"><path d="M6 6L15 1L24 7V22Q24 24 22 24H8Q6 24 6 22z" fill="#1066b5" /><path d="M8 5H22V15H8z" fill="#4fc3f7" /><path d="M6 12L15 17L25 9V22Q25 25 22 25H8Q6 25 6 22z" fill="#2bb3f0" /><path d="M15 17L25 9V14L17 19z" fill="#1273c4" /><rect x="1" y="6" width="14" height="14" rx="1.5" fill="#0f6cc8" /><text x="8" y="17.5" textAnchor="middle" fontSize="12" fontWeight="bold" fill="#fff" fontFamily={OS}>O</text></Svg>],
  ["Chrome", <Chrome key="g" />],
  ["Chrome profile", <Chrome key="h" badge />, "", true],
  ["Power BI Desktop", <Svg w={20} h={26} key="p"><rect x="10.5" y="0" width="9.5" height="26" rx="1" fill="#e0a100" /><path d="M5.5 7Q5.5 6 6.5 6H13Q14.5 6 14.5 7.5V26H5.5z" fill="#f0c02c" /><path d="M0 14Q0 13 1 13H7.5Q9 13 9 14.5V26H0z" fill="#f8dc72" /></Svg>, "bg-[#57574b]", true],
];

function Taskbar() {
  return (
    <footer className="flex h-[41px] shrink-0 items-stretch border-t border-black bg-[linear-gradient(90deg,#24231a_0%,#28271c_45%,#2d2e1e_62%,#25261f_75%,#1f2023_100%)] text-white">
      <button aria-label="Start" className="flex w-12 items-center justify-center">
        <Svg w={16}><path d="M0 2.2L6.8 1.3V7.5H0zM7.7 1.1L16 0V7.5H7.7zM0 8.4H6.8V14.7L0 13.8zM7.7 8.4H16V16L7.7 14.9z" fill="#fff" /></Svg>
      </button>
      <label className="flex w-[288px] shrink-0 items-center gap-3 border border-[#c0c0c0] bg-[#f2f2f2] pl-3">
        <Magnifier color="#1b1a19" size={16} />
        <input aria-label="Type here to search" placeholder="Type here to search" className="w-full bg-transparent text-[14px] outline-none placeholder:text-[#3b3a39]" />
      </label>
      <div className="flex flex-1 pl-px">
        {apps.map(([name, art, bg = "", running]) => (
          <button key={name} aria-label={name} className={`flex w-[49px] items-center justify-center border-b-2 pt-0.5 ${running ? "border-[#76b9ed]" : "border-transparent"} ${bg}`}>
            {art}
          </button>
        ))}
      </div>
      <div className="flex shrink-0 items-center text-[13px]">
        <button className="flex items-center gap-2">
          <Svg w={25} h={26}>
            <circle cx="12" cy="14" r="10" fill="#f3921e" />
            <path d="M4 5.5H13M1 10H15M4 14H17M0 18H14M6 22H14" stroke="#fbe6b4" strokeWidth="1.8" />
            <circle cx="18.5" cy="7" r="6" fill="#c42b1c" />
            <text x="18.5" y="10.5" textAnchor="middle" fontSize="9" fill="#fff" fontFamily={OS}>1</text>
          </Svg>
          <span>31°C</span>
          <span>Haze</span>
        </button>
        <button aria-label="Show hidden icons" className="ml-6"><Svg w={12} h={8}><path d="M1 6.5L6 1.5L11 6.5" stroke="#fff" strokeWidth="1.2" /></Svg></button>
        <button aria-label="Meet now" className="ml-3"><Svg w={13} h={18}><path d="M2.5 2.5Q6.5 -.5 10.5 2.5M2.5 15.5Q6.5 18.5 10.5 15.5" stroke="#fff" /><rect x="1.5" y="5" width="7.5" height="8" rx="1.5" stroke="#fff" strokeWidth="1.1" /><path d="M9 8L12 6V12L9 10" stroke="#fff" /></Svg></button>
        <button aria-label="Battery" className="ml-2.5"><Svg w={17} h={14}><path d="M5 4.5H14.5V12.5H4V9" stroke="#fff" strokeWidth="1.2" /><path d="M6.5 6H13V11H6.5z" fill="#fff" /><path d="M15.5 7H16.5V10H15.5z" fill="#fff" /><path d="M1.5 0V3M4.5 0V3M.5 3.5H5.5V5Q5.5 7 3 7T.5 5zM3 7V10" stroke="#fff" /></Svg></button>
        <button aria-label="Volume" className="ml-2"><Svg w={17} h={14}><path d="M.6 5H3L7 1.2V12.8L3 9H.6z" stroke="#fff" /><path d="M9 5Q10 7 9 9M11 3Q13 7 11 11M13.3 1.2Q16.5 7 13.3 12.8" stroke="#fff" /></Svg></button>
        <button className="ml-1.5 w-7 text-center text-[11px] leading-[17px]">ENG<br />IN</button>
        <button className="ml-1.5 w-[60px] text-center text-[11px] leading-[17px]">11:23 PM<br />6/20/2025</button>
        <button aria-label="Notifications" className="ml-3">
          <Svg w={26} h={26}>
            <path d="M1 3H17V15H8L5 18.5V15H1z" fill="#fff" />
            <path d="M4 6.5H14M4 9H14M4 11.5H10" stroke="#25261f" />
            <circle cx="16.5" cy="16.5" r="7.5" fill="#3a3b3b" stroke="#8a8886" />
            <text x="16.5" y="20.5" textAnchor="middle" fontSize="11" fill="#fff" fontFamily={OS}>3</text>
          </Svg>
        </button>
        <span className="mr-[3px] ml-3 h-full w-px bg-[#6d6d6d]" />
      </div>
    </footer>
  );
}

export default function App() {
  return (
    <div className="flex min-h-screen flex-col overflow-hidden bg-[#f3f2f1] font-['Open_Sans',sans-serif]">
      <TitleBar />
      <Ribbon />
      <div className="flex flex-1">
        <LeftRail />
        <div className="flex min-w-0 flex-1 flex-col">
          <div className="flex flex-1">
            <ReportCanvas />
            <FiltersPane />
          </div>
          <PageTabs />
        </div>
        <aside className="flex w-[34px] shrink-0 flex-col items-center bg-[#f3f2f1] pt-3">
          <button aria-label="Expand quick measure"><DoubleChevron flip /></button>
          <h2 className="mt-[13px] -ml-1 text-[15px] leading-5 font-semibold text-[#252423] [writing-mode:vertical-rl]">Quick measure</h2>
        </aside>
        <VisualizationsPane />
        <DataPane />
      </div>
      <StatusBar />
      <Taskbar />
    </div>
  );
}
